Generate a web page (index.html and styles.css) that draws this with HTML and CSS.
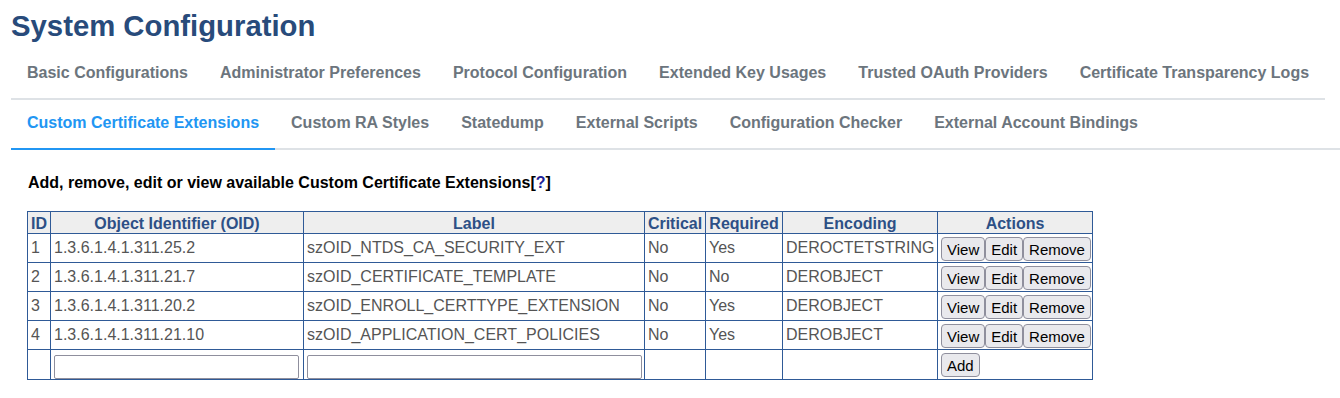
FILE: index.html
```html
<!DOCTYPE html>
<html>
<head>
    <title>System Configuration</title>
    <link rel="stylesheet" href="styles.css">
</head>
<body>
    <div class="page">
        <h1>System Configuration</h1>
        <ul class="tabs">
            <li><a href="#">Basic Configurations</a></li>
            <li><a href="#">Administrator Preferences</a></li>
            <li><a href="#">Protocol Configuration</a></li>
            <li><a href="#">Extended Key Usages</a></li>
            <li><a href="#">Trusted OAuth Providers</a></li>
            <li><a href="#">Certificate Transparency Logs</a></li>
            <li class="active"><a href="#">Custom Certificate Extensions</a></li>
            <li><a href="#">Custom RA Styles</a></li>
            <li><a href="#">Statedump</a></li>
            <li><a href="#">External Scripts</a></li>
            <li><a href="#">Configuration Checker</a></li>
            <li><a href="#">External Account Bindings</a></li>
        </ul>

        <div class="content">
            <p class="intro">Add, remove, edit or view available Custom Certificate Extensions[<a href="#" class="help">?</a>]</p>

            <table class="grid">
                <colgroup>
                    <col class="c-id">
                    <col class="c-oid">
                    <col class="c-label">
                    <col class="c-crit">
                    <col class="c-req">
                    <col class="c-enc">
                    <col class="c-act">
                </colgroup>
                <tr>
                    <th>ID</th>
                    <th>Object Identifier (OID)</th>
                    <th>Label</th>
                    <th>Critical</th>
                    <th>Required</th>
                    <th>Encoding</th>
                    <th>Actions</th>
                </tr>
                <tr>
                    <td>1</td>
                    <td>1.3.6.1.4.1.311.25.2</td>
                    <td>szOID_NTDS_CA_SECURITY_EXT</td>
                    <td>No</td>
                    <td>Yes</td>
                    <td>DEROCTETSTRING</td>
                    <td class="actions"><button>View</button><button>Edit</button><button>Remove</button></td>
                </tr>
                <tr>
                    <td>2</td>
                    <td>1.3.6.1.4.1.311.21.7</td>
                    <td>szOID_CERTIFICATE_TEMPLATE</td>
                    <td>No</td>
                    <td>No</td>
                    <td>DEROBJECT</td>
                    <td class="actions"><button>View</button><button>Edit</button><button>Remove</button></td>
                </tr>
                <tr>
                    <td>3</td>
                    <td>1.3.6.1.4.1.311.20.2</td>
                    <td>szOID_ENROLL_CERTTYPE_EXTENSION</td>
                    <td>No</td>
                    <td>Yes</td>
                    <td>DEROBJECT</td>
                    <td class="actions"><button>View</button><button>Edit</button><button>Remove</button></td>
                </tr>
                <tr>
                    <td>4</td>
                    <td>1.3.6.1.4.1.311.21.10</td>
                    <td>szOID_APPLICATION_CERT_POLICIES</td>
                    <td>No</td>
                    <td>Yes</td>
                    <td>DEROBJECT</td>
                    <td class="actions"><button>View</button><button>Edit</button><button>Remove</button></td>
                </tr>
                <tr>
                    <td></td>
                    <td><input type="text" class="oid-input"></td>
                    <td><input type="text" class="label-input"></td>
                    <td></td>
                    <td></td>
                    <td></td>
                    <td class="actions"><button>Add</button></td>
                </tr>
            </table>
        </div>
    </div>
</body>
</html>
```

FILE: styles.css
```css
body {
    margin: 0;
    padding: 0;
    font-family: "Liberation Sans", Arial, sans-serif;
    background-color: #ffffff;
    color: #000000;
}
.page {
    padding-left: 11px;
}
h1 {
    margin: 0;
    padding-top: 8px;
    height: 40px;
    font-size: 29.3px;
    line-height: 36px;
    color: #284b7b;
}
.tabs {
    list-style: none;
    margin: 0;
    padding: 0;
    display: flex;
    flex-wrap: wrap;
    border-bottom: 2px solid #dee2e6;
}
.tabs li {
    border-bottom: 2px solid #dee2e6;
    margin-bottom: -2px;
}
.tabs a {
    display: block;
    padding: 0 16px;
    height: 50px;
    line-height: 50px;
    font-size: 16px;
    font-weight: bold;
    color: #6c757d;
    text-decoration: none;
}
.tabs li.active {
    border-bottom-color: #2196f3;
}
.tabs li.active a {
    color: #2196f3;
}
.content {
    padding: 23px 0 0 16px;
}
.intro {
    margin: 0 0 18px 1px;
    font-size: 16px;
    font-weight: bold;
    line-height: 20px;
}
.intro .help {
    color: #1f1f99;
    text-decoration: none;
}
.grid {
    table-layout: fixed;
    width: 1066px;
    border-collapse: collapse;
    border: 1px solid #2f5a97;
    font-size: 16px;
    color: #555555;
}
.grid th,
.grid td {
    border: 1px solid #2f5a97;
}
.grid th {
    background-color: #eeeeee;
    color: #2d5086;
    font-weight: bold;
    padding: 3px 1px 0 1px;
    line-height: 18px;
    white-space: nowrap;
}
.grid td {
    vertical-align: top;
    padding: 5px 2px 0 3px;
    line-height: 18px;
    white-space: nowrap;
    overflow: hidden;
}
.c-id { width: 23px; }
.c-oid { width: 253px; }
.c-label { width: 341px; }
.c-crit { width: 61px; }
.c-req { width: 77px; }
.c-enc { width: 155px; }
.c-act { width: 155px; }
.grid td.actions {
    padding: 3px 2px 1px 3px;
}
.grid button {
    height: 24px;
    padding: 0 5px;
    margin: 0;
    font-family: "Liberation Sans", Arial, sans-serif;
    font-size: 15px;
    color: #000000;
    background-color: #e9e9ed;
    border: 1px solid #8f8f9d;
    border-radius: 4px;
}
.grid input {
    height: 24px;
    box-sizing: border-box;
    margin: 0;
    border: 1px solid #8f8f9d;
    border-radius: 2px;
    font-size: 14px;
    padding: 1px 2px;
}
.oid-input { width: 245px; }
.label-input { width: 335px; }
```
